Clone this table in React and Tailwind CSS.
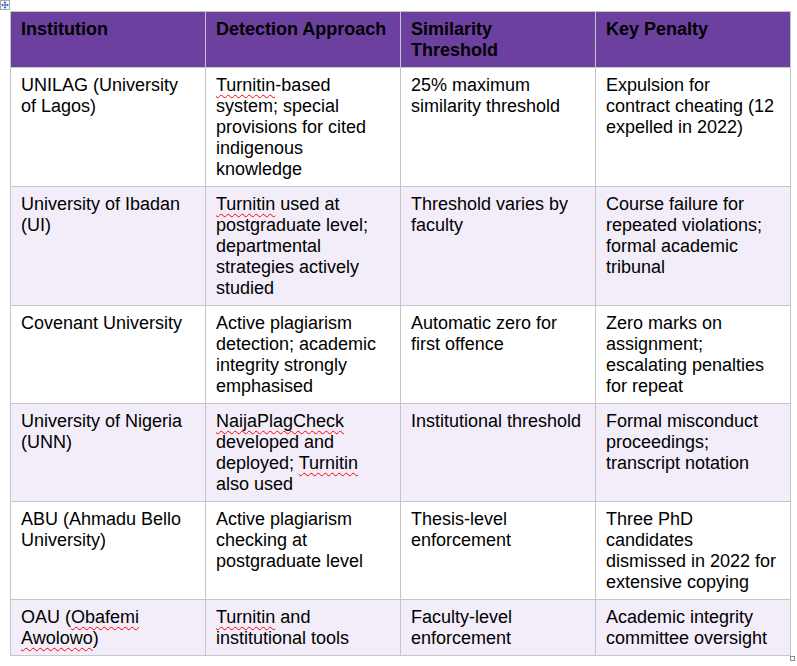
import React from "react";

const S = ({ children }) => (
  <span className="underline decoration-wavy decoration-[#ff0000] decoration-[1px] underline-offset-[3px] [text-decoration-skip-ink:none]">
    {children}
  </span>
);

const header = [
  ["Institution"],
  ["Detection Approach"],
  ["Similarity", "Threshold"],
  ["Key Penalty"],
];

const rows = [
  [
    ["UNILAG (University", "of Lagos)"],
    [<><S>Turnitin</S>-based</>, "system; special", "provisions for cited", "indigenous", "knowledge"],
    ["25% maximum", "similarity threshold"],
    ["Expulsion for", "contract cheating (12", "expelled in 2022)"],
  ],
  [
    ["University of Ibadan", "(UI)"],
    [<><S>Turnitin</S> used at</>, "postgraduate level;", "departmental", "strategies actively", "studied"],
    ["Threshold varies by", "faculty"],
    ["Course failure for", "repeated violations;", "formal academic", "tribunal"],
  ],
  [
    ["Covenant University"],
    ["Active plagiarism", "detection; academic", "integrity strongly", "emphasised"],
    ["Automatic zero for", "first offence"],
    ["Zero marks on", "assignment;", "escalating penalties", "for repeat"],
  ],
  [
    ["University of Nigeria", "(UNN)"],
    [<S>NaijaPlagCheck</S>, "developed and", <>deployed; <S>Turnitin</S></>, "also used"],
    ["Institutional threshold"],
    ["Formal misconduct", "proceedings;", "transcript notation"],
  ],
  [
    ["ABU (Ahmadu Bello", "University)"],
    ["Active plagiarism", "checking at", "postgraduate level"],
    ["Thesis-level", "enforcement"],
    ["Three PhD", "candidates", "dismissed in 2022 for", "extensive copying"],
  ],
  [
    [<>OAU (<S>Obafemi</S></>, <><S>Awolowo</S>)</>],
    [<><S>Turnitin</S> and</>, "institutional tools"],
    ["Faculty-level", "enforcement"],
    ["Academic integrity", "committee oversight"],
  ],
];

function Cell({ lines, bold }) {
  return (
    <div className="w-[195px] shrink-0 overflow-visible border-r border-b border-[#c6c6c6] pl-[10px] pr-1 pt-[7px] pb-[6px]">
      {lines.map((l, i) => (
        <div key={i} className={"whitespace-nowrap h-[21px] leading-[21px] " + (bold ? "font-bold" : "")}>
          {l}
        </div>
      ))}
    </div>
  );
}

export default function App() {
  return (
    <div className="relative w-[797px] h-[666px] bg-white text-black text-[18px] font-['Liberation_Sans',Arial,sans-serif]">
      <svg className="absolute left-0 top-0" width="10" height="10" viewBox="0 0 10 10">
        <rect x="0.5" y="0.5" width="9" height="9" fill="#fff" stroke="#a8a8a8" />
        <path d="M5 1.5 V8.5 M1.5 5 H8.5" stroke="#2f5fc4" strokeWidth="1" />
        <path d="M5 1.5 L3.5 3 H6.5 Z M5 8.5 L3.5 7 H6.5 Z M1.5 5 L3 3.5 V6.5 Z M8.5 5 L7 3.5 V6.5 Z" fill="#2f5fc4" />
      </svg>
      <div className="pl-[10px] pt-[11px]">
        <div className="inline-flex flex-col border-l border-t border-[#c6c6c6]">
          <div className="flex bg-[#6b409e]">
            {header.map((h, i) => (
              <Cell key={i} lines={h} bold />
            ))}
          </div>
          {rows.map((r, ri) => (
            <div key={ri} className={"flex " + (ri % 2 === 1 ? "bg-[#f2edf8]" : "bg-white")}>
              {r.map((c, ci) => (
                <Cell key={ci} lines={c} />
              ))}
            </div>
          ))}
        </div>
      </div>
      <div className="absolute left-[790px] top-[656px] w-[5px] h-[5px] border border-[#8c8c8c] bg-white" />
    </div>
  );
}
